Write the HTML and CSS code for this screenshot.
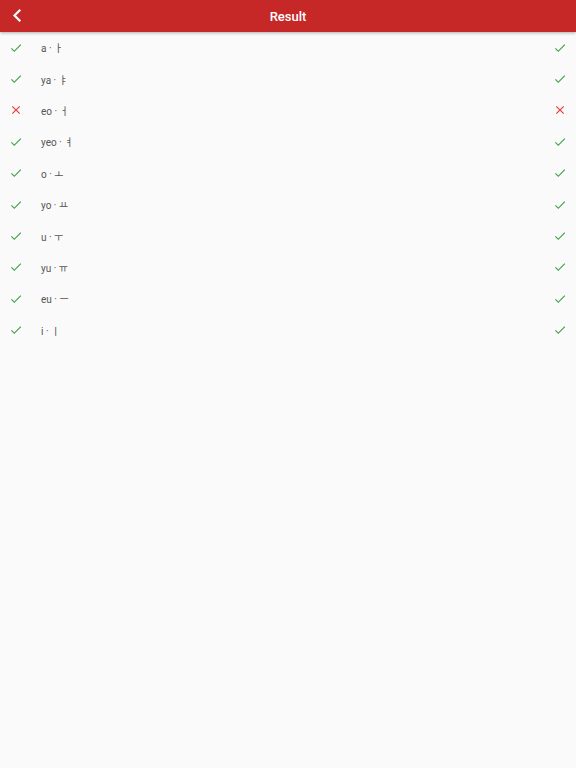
FILE: index.html
```html
<!DOCTYPE html>
<html>
<head>
<meta charset="utf-8">
<link rel="stylesheet" href="styles.css">
</head>
<body>
<header class="bar">
  <svg class="back" viewBox="0 0 24 24" width="24" height="24"><polyline points="15.5,6.5 10.5,11.5 15.5,16.5" fill="none" stroke="#fff" stroke-width="2.2" stroke-linecap="square"/></svg>
  <div class="title">Result</div>
</header>
<ul class="list">
  <li class="row"><svg class="ic ok" viewBox="0 0 24 24"><path d="M9 16.2 4.8 12l-1.4 1.4L9 19 21 7l-1.4-1.4z"/></svg><span class="txt">a · ㅏ</span><svg class="ic ok" viewBox="0 0 24 24"><path d="M9 16.2 4.8 12l-1.4 1.4L9 19 21 7l-1.4-1.4z"/></svg></li>
  <li class="row"><svg class="ic ok" viewBox="0 0 24 24"><path d="M9 16.2 4.8 12l-1.4 1.4L9 19 21 7l-1.4-1.4z"/></svg><span class="txt">ya · ㅑ</span><svg class="ic ok" viewBox="0 0 24 24"><path d="M9 16.2 4.8 12l-1.4 1.4L9 19 21 7l-1.4-1.4z"/></svg></li>
  <li class="row"><svg class="ic bad" viewBox="0 0 24 24"><path d="M19 6.4 17.6 5 12 10.6 6.4 5 5 6.4 10.6 12 5 17.6 6.4 19 12 13.4 17.6 19 19 17.6 13.4 12z"/></svg><span class="txt">eo · ㅓ</span><svg class="ic bad" viewBox="0 0 24 24"><path d="M19 6.4 17.6 5 12 10.6 6.4 5 5 6.4 10.6 12 5 17.6 6.4 19 12 13.4 17.6 19 19 17.6 13.4 12z"/></svg></li>
  <li class="row"><svg class="ic ok" viewBox="0 0 24 24"><path d="M9 16.2 4.8 12l-1.4 1.4L9 19 21 7l-1.4-1.4z"/></svg><span class="txt">yeo · ㅕ</span><svg class="ic ok" viewBox="0 0 24 24"><path d="M9 16.2 4.8 12l-1.4 1.4L9 19 21 7l-1.4-1.4z"/></svg></li>
  <li class="row"><svg class="ic ok" viewBox="0 0 24 24"><path d="M9 16.2 4.8 12l-1.4 1.4L9 19 21 7l-1.4-1.4z"/></svg><span class="txt">o · ㅗ</span><svg class="ic ok" viewBox="0 0 24 24"><path d="M9 16.2 4.8 12l-1.4 1.4L9 19 21 7l-1.4-1.4z"/></svg></li>
  <li class="row"><svg class="ic ok" viewBox="0 0 24 24"><path d="M9 16.2 4.8 12l-1.4 1.4L9 19 21 7l-1.4-1.4z"/></svg><span class="txt">yo · ㅛ</span><svg class="ic ok" viewBox="0 0 24 24"><path d="M9 16.2 4.8 12l-1.4 1.4L9 19 21 7l-1.4-1.4z"/></svg></li>
  <li class="row"><svg class="ic ok" viewBox="0 0 24 24"><path d="M9 16.2 4.8 12l-1.4 1.4L9 19 21 7l-1.4-1.4z"/></svg><span class="txt">u · ㅜ</span><svg class="ic ok" viewBox="0 0 24 24"><path d="M9 16.2 4.8 12l-1.4 1.4L9 19 21 7l-1.4-1.4z"/></svg></li>
  <li class="row"><svg class="ic ok" viewBox="0 0 24 24"><path d="M9 16.2 4.8 12l-1.4 1.4L9 19 21 7l-1.4-1.4z"/></svg><span class="txt">yu · ㅠ</span><svg class="ic ok" viewBox="0 0 24 24"><path d="M9 16.2 4.8 12l-1.4 1.4L9 19 21 7l-1.4-1.4z"/></svg></li>
  <li class="row"><svg class="ic ok" viewBox="0 0 24 24"><path d="M9 16.2 4.8 12l-1.4 1.4L9 19 21 7l-1.4-1.4z"/></svg><span class="txt">eu · ㅡ</span><svg class="ic ok" viewBox="0 0 24 24"><path d="M9 16.2 4.8 12l-1.4 1.4L9 19 21 7l-1.4-1.4z"/></svg></li>
  <li class="row"><svg class="ic ok" viewBox="0 0 24 24"><path d="M9 16.2 4.8 12l-1.4 1.4L9 19 21 7l-1.4-1.4z"/></svg><span class="txt">i · ㅣ</span><svg class="ic ok" viewBox="0 0 24 24"><path d="M9 16.2 4.8 12l-1.4 1.4L9 19 21 7l-1.4-1.4z"/></svg></li>
</ul>
</body>
</html>
```
FILE: styles.css
```css
html, body {
  margin: 0;
  padding: 0;
  background: #fafafa;
  font-family: Roboto, "Noto Sans CJK KR", sans-serif;
}
.bar {
  position: relative;
  height: 32px;
  background: #c62828;
  display: flex;
  align-items: center;
  justify-content: center;
  box-shadow: 0 1px 3px rgba(0,0,0,0.3);
  z-index: 1;
}
.back {
  position: absolute;
  left: 4px;
  top: 4px;
}
.title {
  color: #fff;
  font-size: 13px;
  font-weight: 500;
}
.list {
  list-style: none;
  margin: 0;
  padding: 0;
}
.row {
  height: 31.4px;
  display: flex;
  align-items: center;
  padding: 0 9px 0 9px;
}
.ic {
  width: 14px;
  height: 14px;
  flex: none;
}
.ok { fill: #43a047; }
.bad { fill: #e53935; }
.txt {
  flex: 1;
  margin-left: 18px;
  font-size: 10px;
  color: #555;
}
```
